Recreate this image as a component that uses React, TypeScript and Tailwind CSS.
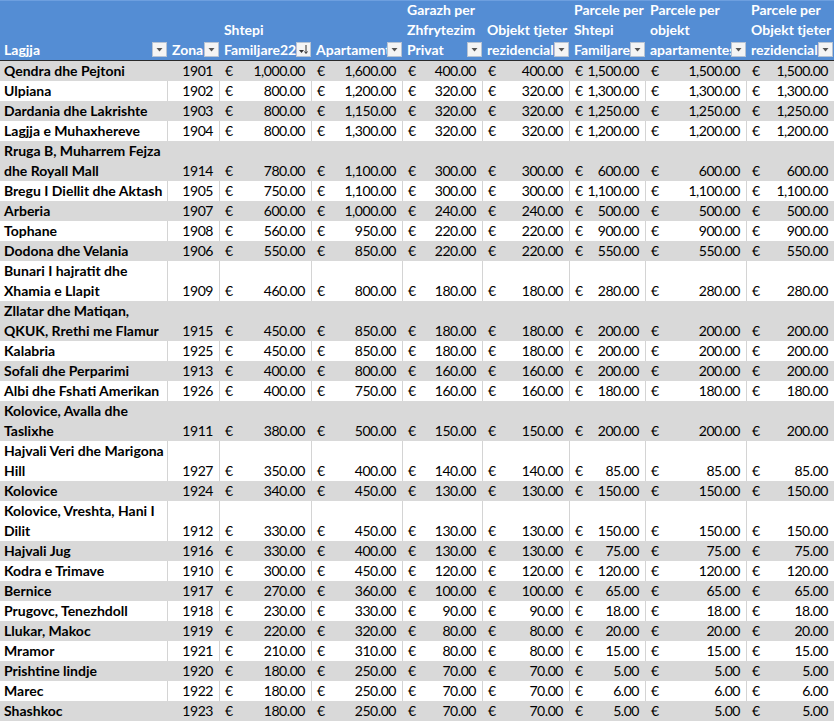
const COLS = "grid-cols-[168px_52px_92px_91px_80px_87px_76px_101px_87px]";

const HEADERS: { lines: string[]; sort?: boolean }[] = [
  { lines: ["Lagjja"] },
  { lines: ["Zona"] },
  { lines: ["Shtepi", "Familjare22"], sort: true },
  { lines: ["Apartamenti"] },
  { lines: ["Garazh per", "Zhfrytezim", "Privat"] },
  { lines: ["Objekt tjeter", "rezidencial"] },
  { lines: ["Parcele per", "Shtepi", "Familjare"] },
  { lines: ["Parcele per", "objekt", "apartamentesh"] },
  { lines: ["Parcele per", "Objekt tjeter", "rezidencial"] },
];

type Row = [string, number, string, string, string, string, string, string, string];

const ROWS: Row[] = [
  ["Qendra dhe Pejtoni", 1901, "1,000.00", "1,600.00", "400.00", "400.00", "1,500.00", "1,500.00", "1,500.00"],
  ["Ulpiana", 1902, "800.00", "1,200.00", "320.00", "320.00", "1,300.00", "1,300.00", "1,300.00"],
  ["Dardania dhe Lakrishte", 1903, "800.00", "1,150.00", "320.00", "320.00", "1,250.00", "1,250.00", "1,250.00"],
  ["Lagjja e Muhaxhereve", 1904, "800.00", "1,300.00", "320.00", "320.00", "1,200.00", "1,200.00", "1,200.00"],
  ["Rruga B, Muharrem Fejza|dhe Royall Mall", 1914, "780.00", "1,100.00", "300.00", "300.00", "600.00", "600.00", "600.00"],
  ["Bregu I Diellit dhe Aktash", 1905, "750.00", "1,100.00", "300.00", "300.00", "1,100.00", "1,100.00", "1,100.00"],
  ["Arberia", 1907, "600.00", "1,000.00", "240.00", "240.00", "500.00", "500.00", "500.00"],
  ["Tophane", 1908, "560.00", "950.00", "220.00", "220.00", "900.00", "900.00", "900.00"],
  ["Dodona dhe Velania", 1906, "550.00", "850.00", "220.00", "220.00", "550.00", "550.00", "550.00"],
  ["Bunari I hajratit dhe|Xhamia e Llapit", 1909, "460.00", "800.00", "180.00", "180.00", "280.00", "280.00", "280.00"],
  ["Zllatar dhe Matiqan,|QKUK, Rrethi me Flamur", 1915, "450.00", "850.00", "180.00", "180.00", "200.00", "200.00", "200.00"],
  ["Kalabria", 1925, "450.00", "850.00", "180.00", "180.00", "200.00", "200.00", "200.00"],
  ["Sofali dhe Perparimi", 1913, "400.00", "800.00", "160.00", "160.00", "200.00", "200.00", "200.00"],
  ["Albi dhe Fshati Amerikan", 1926, "400.00", "750.00", "160.00", "160.00", "180.00", "180.00", "180.00"],
  ["Kolovice, Avalla dhe|Taslixhe", 1911, "380.00", "500.00", "150.00", "150.00", "200.00", "200.00", "200.00"],
  ["Hajvali Veri dhe Marigona|Hill", 1927, "350.00", "400.00", "140.00", "140.00", "85.00", "85.00", "85.00"],
  ["Kolovice", 1924, "340.00", "450.00", "130.00", "130.00", "150.00", "150.00", "150.00"],
  ["Kolovice, Vreshta, Hani I|Dilit", 1912, "330.00", "450.00", "130.00", "130.00", "150.00", "150.00", "150.00"],
  ["Hajvali Jug", 1916, "330.00", "400.00", "130.00", "130.00", "75.00", "75.00", "75.00"],
  ["Kodra e Trimave", 1910, "300.00", "450.00", "120.00", "120.00", "120.00", "120.00", "120.00"],
  ["Bernice", 1917, "270.00", "360.00", "100.00", "100.00", "65.00", "65.00", "65.00"],
  ["Prugovc, Tenezhdoll", 1918, "230.00", "330.00", "90.00", "90.00", "18.00", "18.00", "18.00"],
  ["Llukar, Makoc", 1919, "220.00", "320.00", "80.00", "80.00", "20.00", "20.00", "20.00"],
  ["Mramor", 1921, "210.00", "310.00", "80.00", "80.00", "15.00", "15.00", "15.00"],
  ["Prishtine lindje", 1920, "180.00", "250.00", "70.00", "70.00", "5.00", "5.00", "5.00"],
  ["Marec", 1922, "180.00", "250.00", "70.00", "70.00", "6.00", "6.00", "6.00"],
  ["Shashkoc", 1923, "180.00", "250.00", "70.00", "70.00", "5.00", "5.00", "5.00"],
];

const FilterButton = ({ sort }: { sort?: boolean }) => (
  <div className="absolute right-[1px] bottom-[3px] flex h-[15px] w-[15px] items-center justify-center border border-[#b7c3d3] bg-[#f4f4f4]">
    {sort ? (
      <svg width="11" height="11" viewBox="0 0 11 11">
        <path d="M1 6h5l-2.5 3z" fill="#333" />
        <path d="M8 1v8M6.5 7.5L8 9.5l1.5-2" stroke="#333" strokeWidth="1" fill="none" />
      </svg>
    ) : (
      <svg width="9" height="9" viewBox="0 0 9 9">
        <path d="M1.5 3h6L4.5 6.5z" fill="#555" />
      </svg>
    )}
  </div>
);

const Euro = ({ value }: { value: string }) => (
  <div className="flex items-end justify-between pl-[5px] pr-[6px]">
    <span>€</span>
    <span className="tracking-[-0.45px]">{value}</span>
  </div>
);

export default function App() {
  return (
    <div
      className="w-[834px] h-[721px] overflow-hidden bg-white text-[14px] leading-[20px] text-black"
      style={{ fontFamily: '"Lato", "Liberation Sans", sans-serif' }}
    >
      <div className={`grid ${COLS} h-[61px] border-t border-t-[#6d9fdf] border-b border-b-[#2a2a2a] bg-[#548dd4] font-bold text-white`}>
        {HEADERS.map((h, i) => (
          <div key={i} className="relative flex flex-col justify-end overflow-hidden pl-[4px]">
            {h.lines.map((l) => (
              <div key={l} className="whitespace-nowrap">
                {l}
              </div>
            ))}
            <FilterButton sort={h.sort} />
          </div>
        ))}
      </div>
      {ROWS.map((r, i) => {
        const gray = i % 2 === 0;
        const line = gray ? "border-[#d9d9d9]" : "border-[#d4d4d4]";
        const lines = r[0].split("|");
        return (
          <div key={i} className={`grid ${COLS} ${gray ? "bg-[#d9d9d9]" : "bg-white"}`}>
            <div className={`border-r ${line} pl-[4px] font-bold whitespace-nowrap`}>
              {lines.map((l) => (
                <div key={l}>{l}</div>
              ))}
            </div>
            <div className={`flex items-end justify-end border-r ${line} pr-[6px] tracking-[-0.45px]`}>{r[1]}</div>
            {r.slice(2).map((v, j) => (
              <div key={j} className={`flex flex-col justify-end ${j < 6 ? `border-r ${line}` : ""}`}>
                <Euro value={v as string} />
              </div>
            ))}
          </div>
        );
      })}
    </div>
  );
}
